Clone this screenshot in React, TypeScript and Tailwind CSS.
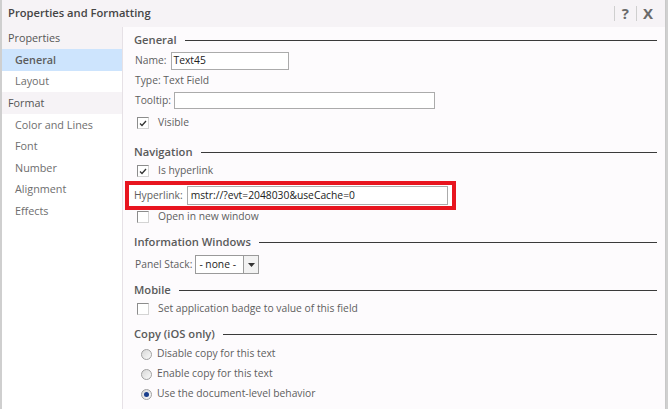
import type { ReactNode } from 'react'

const font = { fontFamily: '"Open Sans", "Noto Sans", Arial, sans-serif' }

function Check({ checked }: { checked?: boolean }) {
  return (
    <span className="flex h-[12px] w-[12px] shrink-0 items-center justify-center border border-[#8c8c8c] border-r-[#d4d4d4] border-b-[#d4d4d4] bg-white">
      {checked && (
        <svg width="8" height="7" viewBox="0 0 8 7">
          <path d="M1 3.5 L3 5.5 L7 1" fill="none" stroke="#333" strokeWidth="1.3" />
        </svg>
      )}
    </span>
  )
}

function Radio({ checked }: { checked?: boolean }) {
  return (
    <span className="flex h-[11px] w-[11px] shrink-0 items-center justify-center rounded-full border border-[#a0a0a0] bg-gradient-to-br from-[#d8d8d8] to-[#fafafa]">
      {checked && <span className="h-[5px] w-[5px] rounded-full bg-[#1a3e8c]" />}
    </span>
  )
}

function Section({ title, className }: { title: string; className: string }) {
  return (
    <div className={`flex h-4 items-center gap-[8px] ${className}`}>
      <span className="text-[11.2px] font-semibold text-[#5a5a5a]">{title}</span>
      <span className="h-px flex-1 bg-[#3a3a3a]" />
    </div>
  )
}

function CheckRow({ label, checked, className }: { label: string; checked?: boolean; className: string }) {
  return (
    <div className={`flex items-center gap-[9px] pl-[3px] ${className}`}>
      <Check checked={checked} />
      <span>{label}</span>
    </div>
  )
}

function RadioRow({ label, checked, className }: { label: string; checked?: boolean; className: string }) {
  return (
    <div className={`flex h-4 items-center gap-[5px] pl-[7px] ${className}`}>
      <Radio checked={checked} />
      <span>{label}</span>
    </div>
  )
}

function NavItem({ children, active }: { children: ReactNode; active?: boolean }) {
  return (
    <div className={`flex h-[21.5px] items-center pl-[13px] text-[10.8px] ${active ? 'bg-[#cde4fd] font-semibold text-[#5c5c5c]' : 'text-[#6e6e6e]'}`}>
      {children}
    </div>
  )
}

function NavHeader({ children }: { children: ReactNode }) {
  return <div className="flex h-[22px] items-center bg-[#f6f3f6] pl-[6px] text-[10.8px] text-[#555]">{children}</div>
}

export default function App() {
  return (
    <div style={font} className="flex h-[409px] w-[668px] overflow-hidden bg-[#d9d9d9] text-[10.3px] text-[#5e5e5e]">
      <div className="w-[2px] shrink-0 bg-[#cfcfcf]" />
      <div className="flex min-w-0 flex-1 flex-col border-r border-[#c8c8c8] bg-white">
        <div className="flex h-[27px] shrink-0 items-center bg-[#f6f3f6] pl-[6px] pr-[12px]">
          <span className="flex-1 text-[11.2px] font-semibold text-[#454545]">Properties and Formatting</span>
          <span className="h-[15px] w-px bg-[#cfcfcf]" />
          <span className="px-[7px] text-[15px] font-bold text-[#6a6a6a]">?</span>
          <span className="h-[15px] w-px bg-[#cfcfcf]" />
          <span className="pl-[6px] text-[15px] font-bold text-[#6a6a6a]">X</span>
        </div>
        <div className="flex min-h-0 flex-1">
          <div className="w-[121px] shrink-0 border-r border-[#e6e1e6] bg-white">
            <NavHeader>Properties</NavHeader>
            <NavItem active>General</NavItem>
            <NavItem>Layout</NavItem>
            <NavHeader>Format</NavHeader>
            <NavItem>Color and Lines</NavItem>
            <NavItem>Font</NavItem>
            <NavItem>Number</NavItem>
            <NavItem>Alignment</NavItem>
            <NavItem>Effects</NavItem>
          </div>
          <div className="min-w-0 flex-1 bg-[#fdfbfd] pl-[11px] pr-[8px]">
            <Section title="General" className="mt-[5px]" />
            <div className="mt-[4px] flex h-[18px] items-center gap-[4px] pl-px">
              <span>Name:</span>
              <span className="flex h-[18px] w-[118px] items-center border border-[#ababab] bg-white pl-[2px] text-[#222]">Text45</span>
            </div>
            <div className="mt-[3px] flex h-4 items-center pl-px">Type: Text Field</div>
            <div className="mt-[3px] flex h-[17px] items-center gap-[3px] pl-px">
              <span>Tooltip:</span>
              <span className="h-[17px] w-[261px] border border-[#ababab] bg-white" />
            </div>
            <CheckRow label="Visible" checked className="mt-[6px] h-4" />
            <Section title="Navigation" className="mt-[13px]" />
            <CheckRow label="Is hyperlink" checked className="mt-[3px] h-4" />
            <div className="-ml-[9px] mt-[2px] flex h-[29px] w-[331px] items-center gap-[4px] border-[4px] border-[#e8151f] bg-white pl-[5px]">
              <span>Hyperlink:</span>
              <span className="flex h-[19px] w-[261px] items-center border border-[#ababab] bg-white pl-[3px] text-[#222]">
                mstr://?evt=2048030&amp;useCache=0
              </span>
            </div>
            <CheckRow label="Open in new window" className="h-[14px]" />
            <Section title="Information Windows" className="mt-[10px]" />
            <div className="mt-[5px] flex h-[19px] items-center gap-[3px] pl-px">
              <span>Panel Stack:</span>
              <span className="flex h-[19px] w-[64px] items-stretch border border-[#9a9a9a] bg-white">
                <span className="flex flex-1 items-center pl-[3px] text-[#222]">- none -</span>
                <span className="flex w-[15px] items-center justify-center border-l border-[#9a9a9a] bg-[#f2f2f2]">
                  <svg width="7" height="4" viewBox="0 0 7 4">
                    <path d="M0 0 H7 L3.5 4 Z" fill="#333" />
                  </svg>
                </span>
              </span>
            </div>
            <Section title="Mobile" className="mt-[8px]" />
            <CheckRow label="Set application badge to value of this field" className="mt-[3px] h-4" />
            <Section title="Copy (iOS only)" className="mt-[9px]" />
            <RadioRow label="Disable copy for this text" className="mt-[4px]" />
            <RadioRow label="Enable copy for this text" className="mt-[4px]" />
            <RadioRow label="Use the document-level behavior" checked className="mt-[4px]" />
          </div>
        </div>
      </div>
      <div className="w-[2px] shrink-0 bg-[#d0d0d0]" />
    </div>
  )
}
